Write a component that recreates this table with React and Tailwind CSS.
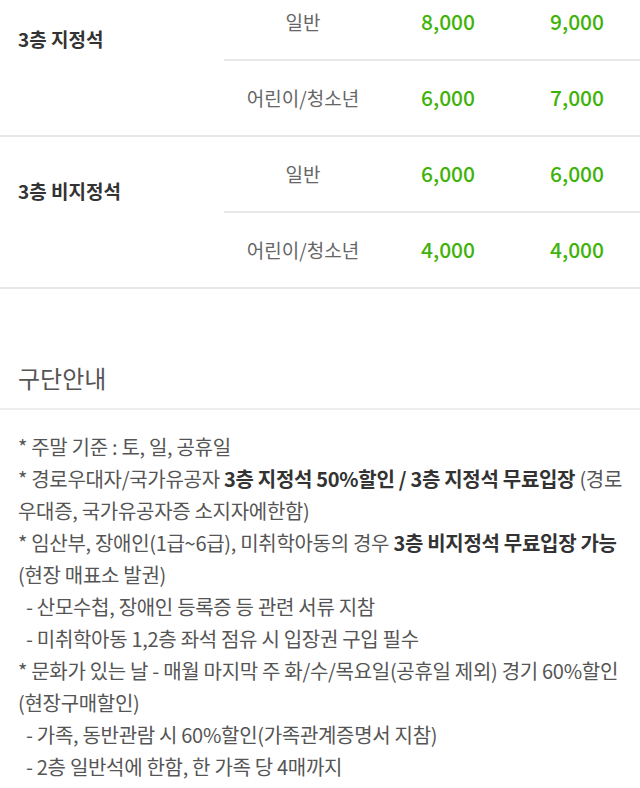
import React from "react";

const groups = [
  {
    label: "3층 지정석",
    rows: [
      { type: "일반", a: "8,000", b: "9,000" },
      { type: "어린이/청소년", a: "6,000", b: "7,000" },
    ],
  },
  {
    label: "3층 비지정석",
    rows: [
      { type: "일반", a: "6,000", b: "6,000" },
      { type: "어린이/청소년", a: "4,000", b: "4,000" },
    ],
  },
];

function B({ children }) {
  return <span className="font-bold text-[#333]">{children}</span>;
}

function Line({ children, indent }) {
  return (
    <div className={"whitespace-nowrap h-[32px] leading-[32px] " + (indent ? "pl-[8px]" : "")}>
      {children}
    </div>
  );
}

export default function App() {
  return (
    <div className="w-[640px] h-[788px] overflow-hidden bg-white font-['Noto_Sans_CJK_KR','Noto_Sans',sans-serif]">
      <div className="-mt-[15px]">
        {groups.map((g) => (
          <div key={g.label} className="flex border-b-2 border-[#e8e8e8]">
            <div className="w-[224px] pl-[18px] pt-[42px] text-[19px] leading-6 font-bold text-[#333]">
              {g.label}
            </div>
            <div className="flex-1">
              {g.rows.map((r, i) => (
                <div
                  key={r.type}
                  className={
                    "flex items-center " +
                    (i === 0 ? "h-[76px] border-b-2 border-[#e8e8e8]" : "h-[74px]")
                  }
                >
                  <div className="w-[158px] text-center text-[19px] text-[#666]">{r.type}</div>
                  <div className="w-[132px] text-center text-[21px] font-medium text-[#3fb30a]">{r.a}</div>
                  <div className="flex-1 text-center text-[21px] font-medium text-[#3fb30a]">{r.b}</div>
                </div>
              ))}
            </div>
          </div>
        ))}
      </div>

      <div className="pt-[74px]">
        <div className="px-[18px] pb-[15px] border-b-2 border-[#eeeeee]">
          <h2 className="text-[24px] leading-[30px] font-normal text-[#555]">구단안내</h2>
        </div>
        <div className="px-[18px] pt-[21px] text-[20px] text-[#555] tracking-[-0.3px]">
          <Line>* 주말 기준 : 토, 일, 공휴일</Line>
          <Line>
            * 경로우대자/국가유공자 <B>3층 지정석 50%할인 / 3층 지정석 무료입장</B> (경로
          </Line>
          <Line>우대증, 국가유공자증 소지자에한함)</Line>
          <Line>
            * 임산부, 장애인(1급~6급), 미취학아동의 경우 <B>3층 비지정석 무료입장 가능</B>
          </Line>
          <Line>(현장 매표소 발권)</Line>
          <Line indent>- 산모수첩, 장애인 등록증 등 관련 서류 지참</Line>
          <Line indent>- 미취학아동 1,2층 좌석 점유 시 입장권 구입 필수</Line>
          <Line>* 문화가 있는 날 - 매월 마지막 주 화/수/목요일(공휴일 제외) 경기 60%할인</Line>
          <Line>(현장구매할인)</Line>
          <Line indent>- 가족, 동반관람 시 60%할인(가족관계증명서 지참)</Line>
          <Line indent>- 2층 일반석에 한함, 한 가족 당 4매까지</Line>
        </div>
      </div>
    </div>
  );
}
